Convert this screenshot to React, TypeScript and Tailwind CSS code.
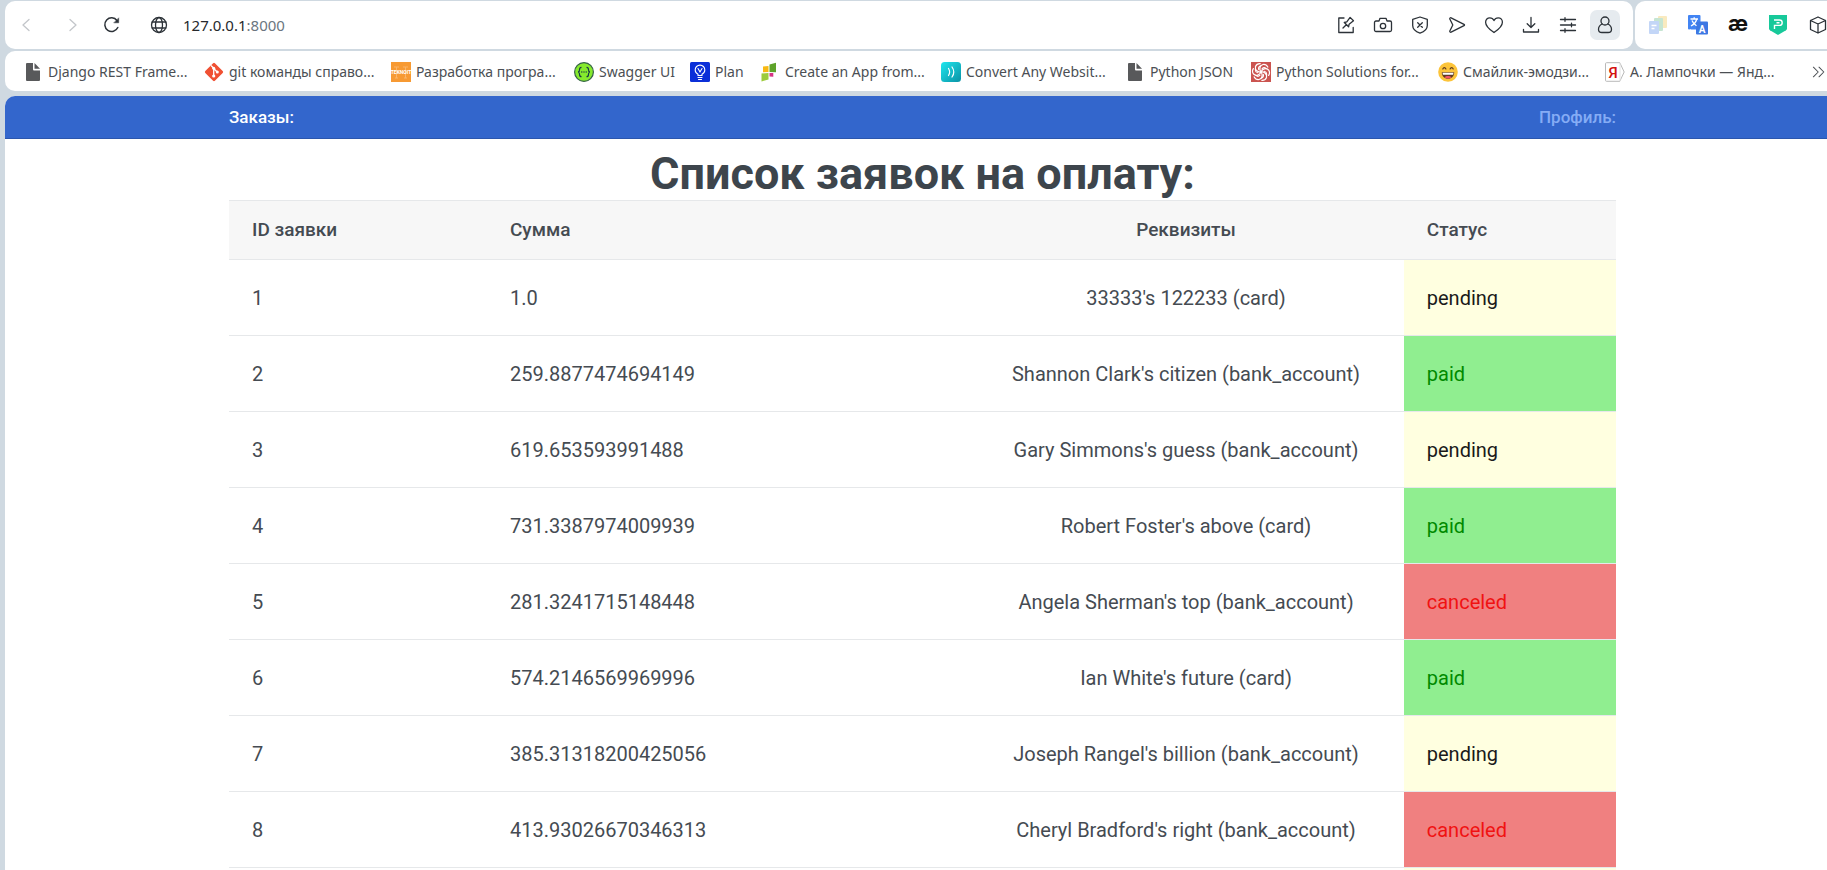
import React from "react";

type Status = "pending" | "paid" | "canceled";

const rows: { id: number; sum: string; req: string; status: Status }[] = [
  { id: 1, sum: "1.0", req: "33333's 122233 (card)", status: "pending" },
  { id: 2, sum: "259.8877474694149", req: "Shannon Clark's citizen (bank_account)", status: "paid" },
  { id: 3, sum: "619.653593991488", req: "Gary Simmons's guess (bank_account)", status: "pending" },
  { id: 4, sum: "731.3387974009939", req: "Robert Foster's above (card)", status: "paid" },
  { id: 5, sum: "281.3241715148448", req: "Angela Sherman's top (bank_account)", status: "canceled" },
  { id: 6, sum: "574.2146569969996", req: "Ian White's future (card)", status: "paid" },
  { id: 7, sum: "385.31318200425056", req: "Joseph Rangel's billion (bank_account)", status: "pending" },
  { id: 8, sum: "413.93026670346313", req: "Cheryl Bradford's right (bank_account)", status: "canceled" },
];

const statusStyle: Record<Status, string> = {
  pending: "bg-[#ffffe0] text-[#1a1a1a]",
  paid: "bg-[#90ee90] text-[#008a00]",
  canceled: "bg-[#f08080] text-[#f01212]",
};

function Line({ children, className = "size-5" }: { children: React.ReactNode; className?: string }) {
  return (
    <svg
      viewBox="0 0 20 20"
      className={className}
      fill="none"
      stroke="currentColor"
      strokeWidth="1.3"
      strokeLinecap="round"
      strokeLinejoin="round"
      aria-hidden="true"
    >
      {children}
    </svg>
  );
}

const PageIcon = () => (
  <svg viewBox="0 0 20 20" className="size-5 shrink-0" aria-hidden="true">
    <path d="M4 1h6v6.500a1 1 0 0 0 1 1h6V18a1 1 0 0 1-1 1H4a1 1 0 0 1-1-1V2a1 1 0 0 1 1-1z" fill="#58595b" />
    <path d="M11.500 1 17 6.800h-5.500z" fill="#58595b" />
  </svg>
);

const GitIcon = () => (
  <svg viewBox="0 0 20 20" className="size-5 shrink-0" aria-hidden="true">
    <rect x="3.200" y="3.200" width="13.600" height="13.600" rx="1.300" transform="rotate(45 10 10)" fill="#f05033" />
    <path d="M7 3.500 9.700 6.200V14M9.700 6.500l3.500 3.500" stroke="#fff" strokeWidth="1.300" fill="none" />
    <circle cx="9.700" cy="6.300" r="1.500" fill="#fff" />
    <circle cx="9.700" cy="14" r="1.600" fill="#fff" />
    <circle cx="13.300" cy="10.100" r="1.500" fill="#fff" />
  </svg>
);

const TeknoIcon = () => (
  <svg viewBox="0 0 20 20" className="size-5 shrink-0" aria-hidden="true">
    <rect width="20" height="20" fill="#f79a33" />
    <path d="M5.500 5v11M14.500 5v11M3 5h5M12 5h5M4 16h3M13 16h3" stroke="#fab469" strokeWidth="1" />
    <text x="10" y="11.500" fontSize="5" fontWeight="700" fontFamily="Roboto" textAnchor="middle" fill="#fff">TEKNOIT</text>
  </svg>
);

const SwaggerIcon = () => (
  <svg viewBox="0 0 20 20" className="size-5 shrink-0" aria-hidden="true">
    <circle cx="10" cy="10" r="9.400" fill="#85ea2d" stroke="#35614a" strokeWidth="1.200" />
    <path
      d="M7.500 5.300c-1.600 0-1.900.7-1.900 2 0 1.700 0 2.400-1.500 2.700 1.500.3 1.500 1 1.500 2.700 0 1.300.3 2 1.900 2M12.500 5.300c1.600 0 1.900.7 1.900 2 0 1.700 0 2.400 1.500 2.700-1.500.3-1.500 1-1.500 2.700 0 1.300-.3 2-1.900 2"
      fill="none"
      stroke="#173647"
      strokeWidth="1.200"
    />
    <g fill="#173647">
      <circle cx="7.800" cy="10" r=".7" />
      <circle cx="10" cy="10" r=".7" />
      <circle cx="12.200" cy="10" r=".7" />
    </g>
  </svg>
);

const PlanIcon = () => (
  <svg viewBox="0 0 20 20" className="size-5 shrink-0" aria-hidden="true">
    <rect width="20" height="20" rx="1.500" fill="#0b2fd8" />
    <g fill="none" stroke="#fff" strokeWidth="1.100" strokeLinecap="round">
      <path d="M8 13.500v-1.300C6.300 11.300 5.200 9.900 5.200 7.900a4.800 4.800 0 0 1 9.600 0c0 2-1.100 3.400-2.800 4.300v1.300zM8 15.500h4M8.500 17.500h3" />
      <path d="m8 6.500 2 3.500 2-3.500" />
    </g>
  </svg>
);

const AppIcon = () => (
  <svg viewBox="0 0 20 20" className="size-5 shrink-0" aria-hidden="true">
    <path d="M3 4.500 8.500 4v6L3 10.200z" fill="#f8b912" />
    <path d="M9.500 2.500 16 .8v9.400L9.500 10z" fill="#5ea32a" />
    <path d="M1.500 11.500 8.500 11v6.500l-7 2z" fill="#9ccb3b" />
    <path d="M9.500 11h3.800v3.800l-3.800-.3z" fill="#d63384" />
  </svg>
);

const ConvertIcon = () => (
  <svg viewBox="0 0 20 20" className="size-5 shrink-0" aria-hidden="true">
    <defs>
      <linearGradient id="teal" x1="0" y1="0" x2="1" y2="1">
        <stop offset="0" stopColor="#1fe6ee" />
        <stop offset="1" stopColor="#0a92a5" />
      </linearGradient>
    </defs>
    <rect width="20" height="20" rx="3.500" fill="url(#teal)" />
    <path d="M7.500 6.500c1.500 2.300 1.500 4.700 0 7M11 5c2.300 3.200 2.300 6.800 0 10" fill="none" stroke="#fff" strokeWidth="1.200" strokeLinecap="round" />
  </svg>
);

const SwirlIcon = () => (
  <svg viewBox="0 0 20 20" className="size-5 shrink-0" aria-hidden="true">
    <rect width="20" height="20" fill="#cb5450" />
    <g fill="none" stroke="#fff" strokeWidth="1.200" strokeLinecap="round">
      {[0, 60, 120, 180, 240, 300].map((a) => (
        <path key={a} d="M10 10C8 7.500 8.500 3.500 12 2.500c2.500-.3 4 1 4.800 2.600M11 6.800c1.200-1.200 3-1.200 4.200-.2" transform={`rotate(${a} 10 10)`} />
      ))}
    </g>
  </svg>
);

const SmileIcon = () => (
  <svg viewBox="0 0 20 20" className="size-5 shrink-0" aria-hidden="true">
    <circle cx="10" cy="10" r="9.800" fill="#fcc43a" />
    <path d="M3.800 10.200h12.400c0 4-2.700 6.500-6.200 6.500s-6.200-2.500-6.200-6.500z" fill="#5f3b20" />
    <path d="M4.500 10.700h11l-.4 2H4.900z" fill="#fff" />
    <path d="M6.500 15.300c1.500-1.800 5.500-1.800 7 0-1.800 1.600-5.200 1.600-7 0z" fill="#f2526b" />
    <path d="M4.800 7c.8-1.800 2.300-1.800 3.100 0M12.100 7c.8-1.800 2.300-1.800 3.100 0" fill="none" stroke="#5f3b20" strokeWidth="1.200" strokeLinecap="round" />
  </svg>
);

const YandexIcon = () => (
  <svg viewBox="0 0 20 20" className="size-5 shrink-0" aria-hidden="true">
    <path d="M1.500.7h13.300l4.400 9.300-4.400 9.300H1.500a1 1 0 0 1-1-1V1.700a1 1 0 0 1 1-1z" fill="#fff" stroke="#b9b9b9" />
    <path d="M15 1v18" stroke="#e4e4e4" />
    <text x="8" y="15.500" fontSize="15" fontWeight="500" fontFamily="Roboto" textAnchor="middle" fill="#d3120f">Я</text>
  </svg>
);

const bookmarks: { label: string; icon: React.ReactNode; width: string }[] = [
  { label: "Django REST Frame...", icon: <PageIcon />, width: "w-[181px]" },
  { label: "git команды справо...", icon: <GitIcon />, width: "w-[187px]" },
  { label: "Разработка програ...", icon: <TeknoIcon />, width: "w-[183px]" },
  { label: "Swagger UI", icon: <SwaggerIcon />, width: "w-[116px]" },
  { label: "Plan", icon: <PlanIcon />, width: "w-[70px]" },
  { label: "Create an App from...", icon: <AppIcon />, width: "w-[181px]" },
  { label: "Convert Any Websit...", icon: <ConvertIcon />, width: "w-[184px]" },
  { label: "Python JSON", icon: <PageIcon />, width: "w-[126px]" },
  { label: "Python Solutions for...", icon: <SwirlIcon />, width: "w-[187px]" },
  { label: "Смайлик-эмодзи...", icon: <SmileIcon />, width: "w-[167px]" },
  { label: "А. Лампочки — Янд...", icon: <YandexIcon />, width: "w-[190px]" },
];

const tools: { label: string; art: React.ReactNode }[] = [
  { label: "Закрепить", art: <><path d="M8 3H2.800v14.500h14.400V12.500" /><path d="m7 13 3.300-3.300M8.300 7.500l4.300 4.300.5-2.600 4.400-3.400-3.400-3.400-3.300 4.500z" /></> },
  { label: "Снимок", art: <><path d="M3 6h3l1-2.700h6L14 6h3a1.500 1.500 0 0 1 1.500 1.500V15a1.500 1.500 0 0 1-1.500 1.500H3A1.500 1.500 0 0 1 1.500 15V7.500A1.500 1.500 0 0 1 3 6z" /><circle cx="10" cy="11" r="2.700" /></> },
  { label: "Блокировка рекламы", art: <><path d="m10 2 7.300 2.300v6.200c0 3.500-3.300 6.300-7.300 7.700-4-1.400-7.300-4.200-7.300-7.700V4.300z" /><path d="m7.700 7.700 4.600 4.600M12.300 7.700l-4.600 4.600" /></> },
  { label: "Моя лента", art: <path d="M2.800 4c-.3-1 .6-1.500 1.300-1.200L17 9.300c.7.400.7 1 0 1.400L4.100 17.200c-.7.300-1.600-.2-1.300-1.200L5.800 10z" /> },
  { label: "Избранное", art: <path d="M10 17.500C7 15.500 1.600 11.600 1.600 7.200c0-2.600 1.900-4.400 4.200-4.400 1.800 0 3.400 1 4.200 2.800.8-1.800 2.400-2.800 4.200-2.800 2.300 0 4.200 1.800 4.200 4.400 0 4.400-5.400 8.300-8.400 10.300z" /> },
  { label: "Загрузки", art: <path d="M10 2.500v9.800M6.200 8.700l3.800 3.800 3.800-3.800M2.500 14.500V17h15v-2.500" /> },
  { label: "Настройки", art: <path d="M2.500 4.500h15M2.500 10h15M2.500 15.500h15M7 2.700v3.600M13.500 8.200v3.600M7 13.700v3.600" /> },
  { label: "Профиль", art: <><circle cx="10" cy="6" r="4" /><path d="M7.200 9c-2.600 1.200-3.700 3-3.700 5.200 0 2 1.300 3.300 3.400 3.300h6.200c2.100 0 3.400-1.300 3.400-3.300 0-2.200-1.100-4-3.700-5.200" /></> },
];

const extensions: { label: string; icon: React.ReactNode }[] = [
  {
    label: "Вкладки",
    icon: (
      <svg viewBox="0 0 20 20" className="size-5 opacity-80" aria-hidden="true">
        <rect x="10" y="1" width="9" height="12" rx="1" fill="#f8e6b0" />
        <rect x="6" y="3" width="9" height="13" rx="1" fill="#b9dfc8" />
        <rect x="1" y="6" width="10" height="13" rx="1" fill="#b5cdf6" />
        <path d="M3.500 10.500h5M3.500 13.500h3" stroke="#fff" strokeWidth="1.400" />
      </svg>
    ),
  },
  {
    label: "Переводчик",
    icon: (
      <svg viewBox="0 0 20 20" className="size-5" aria-hidden="true">
        <rect width="12.500" height="14.500" rx="1" fill="#4284f3" />
        <rect x="8" y="6.500" width="12" height="13" rx="1" fill="#3d78e3" />
        <path d="M2.500 4h7.500M6.200 2.300V4M8.800 4c-.8 3-3 5.500-5.800 7M4 5.500c1 2.600 2.700 4.200 4.500 5.200M2 14.500c1 2.500 2.500 3.500 5 3.500" fill="none" stroke="#fff" strokeWidth="1.300" />
        <text x="14" y="17.500" fontSize="10" fontWeight="700" fontFamily="Roboto" textAnchor="middle" fill="#fff">A</text>
      </svg>
    ),
  },
  {
    label: "Словарь",
    icon: <span className="pb-1 font-[Inter,sans-serif] text-[22px] leading-5 font-bold text-[#111111]">æ</span>,
  },
  {
    label: "Защита",
    icon: (
      <svg viewBox="0 0 20 20" className="size-5" aria-hidden="true">
        <path d="M1 0h18v13.500c0 .8-.4 1.300-1 1.700L10 20l-8-4.800c-.6-.4-1-.9-1-1.700z" fill="#17c99a" />
        <path d="M6 5h5.500a2.700 2.700 0 0 1 0 5.400H6.500V14M8.500 7.700h3" fill="none" stroke="#fff" strokeWidth="1.400" />
      </svg>
    ),
  },
  {
    label: "Расширения",
    icon: (
      <Line>
        <path d="m10 2 7.500 3.500v9L10 18l-7.500-3.500v-9zM2.500 5.500 10 9l7.500-3.500M10 9v9" />
      </Line>
    ),
  },
];

function BrowserBars() {
  return (
    <div className="flex flex-col gap-0.5 pt-px pl-[5px] font-['Noto_Sans',sans-serif]">
      <div className="flex h-12 gap-0.5">
        <div className="flex grow items-center rounded-[10px] bg-white pr-[13px] pl-[11px] text-[#2c3238]">
          <button type="button" aria-label="Назад" className="flex w-10 text-[#c3c6ca]">
            <Line><path d="M13 4.500 7 10l6 5.500" /></Line>
          </button>
          <button type="button" aria-label="Вперёд" className="ml-[6px] flex w-10 text-[#c3c6ca]">
            <Line><path d="m8 4.500 6 5.500-6 5.500" /></Line>
          </button>
          <button type="button" aria-label="Обновить" className="flex w-[47px]">
            <Line>
              <path d="M15.800 12.500A6.800 6.800 0 1 1 15 5.500" strokeWidth="1.500" />
              <path d="M16.700 3.200v4.600h-4.600z" fill="currentColor" strokeWidth=".5" />
            </Line>
          </button>
          <Line className="size-5 shrink-0">
            <circle cx="10" cy="10" r="7.500" />
            <ellipse cx="10" cy="10" rx="3.500" ry="7.500" />
            <path d="M3.200 7h13.600M3.200 13h13.600" />
          </Line>
          <p className="ml-[14px] grow text-[15px] leading-6 text-[#26292d]">
            127.0.0.1<span className="text-[#6b7680]">:8000</span>
          </p>
          <div className="flex items-center gap-[7px]">
            {tools.map((t) => (
              <button
                key={t.label}
                type="button"
                aria-label={t.label}
                className="flex size-[30px] items-center justify-center rounded-[7px] last:bg-[#e6ebef]"
              >
                <Line>{t.art}</Line>
              </button>
            ))}
          </div>
        </div>
        <div className="flex w-48 shrink-0 items-center gap-5 overflow-hidden rounded-l-[10px] bg-white pl-[13px] text-[#2c3238]">
          {extensions.map((e) => (
            <button key={e.label} type="button" aria-label={e.label} className="flex size-5 shrink-0 items-center justify-center">
              {e.icon}
            </button>
          ))}
        </div>
      </div>
      <nav aria-label="Закладки" className="flex h-10 items-center rounded-l-[10px] bg-white pt-0.5 pl-[18px] text-[#4b4f54]">
        {bookmarks.map((b) => (
          <a key={b.label} href="#" className={`flex shrink-0 items-center gap-[5px] text-sm leading-5 whitespace-nowrap ${b.width}`}>
            {b.icon}
            {b.label}
          </a>
        ))}
        <button type="button" aria-label="Другие закладки" className="ml-auto flex">
          <Line className="size-4"><path d="m3 4 6 6-6 6M10 4l6 6-6 6" /></Line>
        </button>
      </nav>
    </div>
  );
}

export default function App() {
  return (
    <div className="flex min-h-screen flex-col gap-[5px] bg-[#cfd9e1]">
      <BrowserBars />
      <div className="ml-[5px] grow overflow-hidden rounded-tl-[10px] bg-white font-[Roboto,sans-serif] text-[#454b52]">
        <header className="flex h-[43px] items-center justify-between border-b border-[#2b56ad] bg-[#3366cc] pr-[211px] pl-56 text-[17px] leading-6 font-medium">
          <a href="#orders" className="text-white">Заказы:</a>
          <a href="#profile" className="text-[#85acf5]">Профиль:</a>
        </header>
        <main className="pt-2 pr-[211px] pl-56">
          <h1 className="text-center text-[45px] leading-[53px] font-bold text-[#3d454c]">Список заявок на оплату:</h1>
          <table className="w-full table-fixed border-collapse">
            <colgroup>
              <col className="w-[18.6%]" />
              <col className="w-[34.7%]" />
              <col className="w-[31.4%]" />
              <col />
            </colgroup>
            <thead>
              <tr className="h-[59px] border-y border-[#e6e8ea] bg-[#f7f7f7] text-left text-[19px] leading-6">
                <th scope="col" className="px-[23px] font-medium">ID заявки</th>
                <th scope="col" className="px-[23px] font-medium">Сумма</th>
                <th scope="col" className="px-[23px] text-center font-medium">Реквизиты</th>
                <th scope="col" className="px-[23px] font-medium">Статус</th>
              </tr>
            </thead>
            <tbody>
              {rows.map((r) => (
                <tr key={r.id} className="h-[76px] border-b border-[#e6e8ea] text-[20px] leading-7">
                  <td className="px-[23px]">{r.id}</td>
                  <td className="px-[23px]">{r.sum}</td>
                  <td className="px-[23px] text-center whitespace-nowrap">{r.req}</td>
                  <td className={`px-[23px] ${statusStyle[r.status]}`}>{r.status}</td>
                </tr>
              ))}
              <tr className="h-0.5" aria-hidden="true">
                <td colSpan={3} />
                <td className="bg-[#ffffe0]" />
              </tr>
            </tbody>
          </table>
        </main>
      </div>
    </div>
  );
}
